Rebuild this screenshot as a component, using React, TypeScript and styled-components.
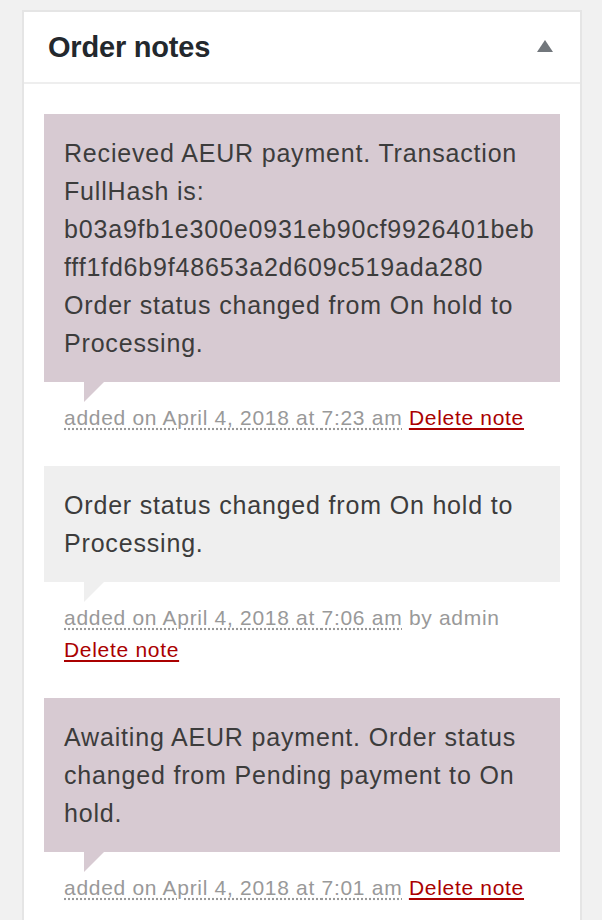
import React from "react";
import styled, { createGlobalStyle } from "styled-components";

const Global = createGlobalStyle`
  html, body { margin: 0; padding: 0; background: #f1f1f1; }
  body { font-family: "Liberation Sans", Arial, Helvetica, sans-serif; }
`;

const Page = styled.div`
  padding: 10px 0 0 22px;
  width: 602px;
  box-sizing: border-box;
`;

const Panel = styled.div`
  background: #fff;
  border: 2px solid #e5e5e5;
  border-bottom: none;
  width: 560px;
  box-sizing: border-box;
`;

const Header = styled.div`
  height: 70px;
  display: flex;
  align-items: center;
  justify-content: space-between;
  padding: 0 27px 0 24px;
  border-bottom: 2px solid #eeeeee;
`;

const Title = styled.h2`
  margin: 0;
  font-size: 29px;
  font-weight: 700;
  color: #23282d;
  letter-spacing: -0.2px;
`;

const Toggle = styled.span`
  width: 0;
  height: 0;
  border-left: 8px solid transparent;
  border-right: 8px solid transparent;
  border-bottom: 12px solid #72777c;
  margin-top: -2px;
`;

const List = styled.ul`
  list-style: none;
  margin: 0;
  padding: 30px 20px 20px 20px;
`;

const Note = styled.li`
  margin: 0 0 32px 0;
`;

const Bubble = styled.div<{ $tone: "system" | "private" }>`
  position: relative;
  background: ${(p) => (p.$tone === "system" ? "#d7cad2" : "#efefef")};
  padding: 20px;
  font-size: 25px;
  letter-spacing: 0.82px;
  line-height: 38px;
  color: #3c3c3c;
  overflow-wrap: break-word;
  &::after {
    content: "";
    position: absolute;
    left: 40px;
    bottom: -20px;
    width: 0;
    height: 0;
    border-style: solid;
    border-width: 20px 20px 0 0;
    border-color: ${(p) => (p.$tone === "system" ? "#d7cad2" : "#efefef")} transparent transparent transparent;
  }
`;

const Meta = styled.p`
  margin: 0;
  padding: 20px 20px 0 20px;
  font-size: 21px;
  letter-spacing: 0.7px;
  line-height: 32px;
  color: #999;
`;

const Stamp = styled.abbr`
  text-decoration: underline dotted #999;
  text-underline-offset: 3px;
  cursor: help;
`;

const DeleteLink = styled.a`
  color: #a00;
  text-decoration: underline;
  text-underline-offset: 3px;
`;

type N = { tone: "system" | "private"; text: React.ReactNode; time: string; by?: string };

const notes: N[] = [
  {
    tone: "system",
    text: (
      <>
        Recieved AEUR payment. Transaction FullHash is:
        b03a9fb1e300e0931eb90cf9926401bebfff1fd6b9f48653a2d609c519ada280 Order status changed from On hold to Processing.
      </>
    ),
    time: "7:23 am",
  },
  { tone: "private", text: "Order status changed from On hold to Processing.", time: "7:06 am", by: "admin" },
  {
    tone: "system",
    text: "Awaiting AEUR payment. Order status changed from Pending payment to On hold.",
    time: "7:01 am",
  },
];

export default function App() {
  return (
    <>
      <Global />
      <Page>
        <Panel>
          <Header>
            <Title>Order notes</Title>
            <Toggle />
          </Header>
          <List>
            {notes.map((n, i) => (
              <Note key={i}>
                <Bubble $tone={n.tone}>{n.text}</Bubble>
                <Meta>
                  <Stamp title="2018-04-04">added on April 4, 2018 at {n.time}</Stamp>
                  {n.by ? ` by ${n.by}` : ""} <DeleteLink href="#">Delete note</DeleteLink>
                </Meta>
              </Note>
            ))}
          </List>
        </Panel>
      </Page>
    </>
  );
}
